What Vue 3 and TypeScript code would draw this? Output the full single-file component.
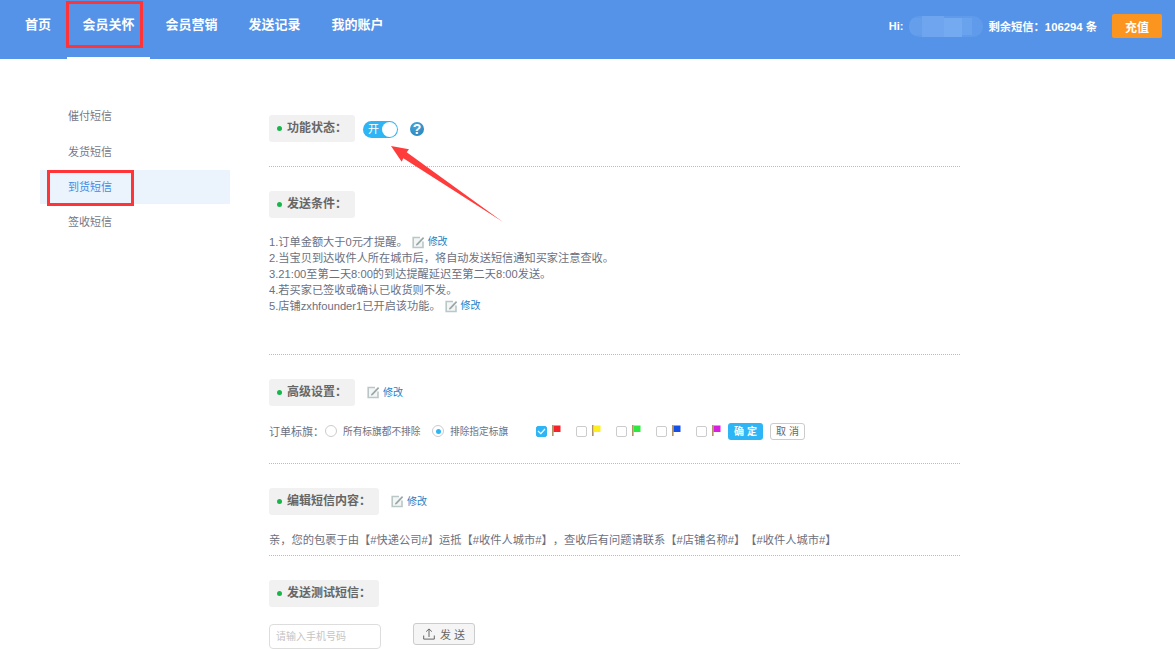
<script setup lang="ts">
const navItems: string[] = ['首页', '会员关怀', '会员营销', '发送记录', '我的账户']
const sideItems: string[] = ['催付短信', '发货短信', '到货短信', '签收短信']
const flags: { color: string; checked: boolean }[] = [
  { color: '#f5222a', checked: true },
  { color: '#fdee1e', checked: false },
  { color: '#2ee83f', checked: false },
  { color: '#1450e6', checked: false },
  { color: '#d81fe0', checked: false },
]
</script>

<template>
  <div class="page">
    <svg class="defs" width="0" height="0" aria-hidden="true">
      <symbol id="edit-icon" viewBox="0 0 13 13">
        <path d="M11 5.5V11.5H1.2V1.5H8" fill="#f4f6f6" stroke="#b9c7c7" stroke-width="1.6" />
        <path d="M5 8.6 11.6 1.6" fill="none" stroke="#9aa8a8" stroke-width="1.7" />
        <path d="M4 9.6 4.5 7.8 5.8 9.1Z" fill="#8b9999" />
      </symbol>
    </svg>

    <header class="topbar">
      <nav class="nav">
        <a v-for="(item, i) in navItems" :key="item" class="nav-item" :class="{ active: i === 1 }">{{ item }}</a>
      </nav>
      <div class="account">
        <span class="hi">Hi:</span>
        <span class="blurred"><i></i><i></i><i></i><i></i></span>
        <span class="quota">剩余短信：106294 条</span>
        <button class="recharge">充值</button>
      </div>
    </header>

    <div class="body">
      <aside class="side">
        <a v-for="(item, i) in sideItems" :key="item" class="side-item" :class="{ current: i === 2 }">{{ item }}</a>
      </aside>

      <main class="content">
        <section class="section first">
          <div class="head-row">
            <h3 class="head">功能状态：</h3>
            <span class="toggle"><span class="toggle-text">开</span><span class="knob"></span></span>
            <span class="help">?</span>
          </div>
        </section>

        <section class="section conditions">
          <div class="head-row"><h3 class="head">发送条件：</h3></div>
          <ol class="rules">
            <li>1.订单金额大于0元才提醒。<a class="edit inline"><svg width="13" height="13"><use href="#edit-icon" /></svg><span>修改</span></a></li>
            <li>2.当宝贝到达收件人所在城市后，将自动发送短信通知买家注意查收。</li>
            <li>3.21:00至第二天8:00的到达提醒延迟至第二天8:00发送。</li>
            <li>4.若买家已签收或确认已收货则不发。</li>
            <li>5.店铺zxhfounder1已开启该功能。<a class="edit inline"><svg width="13" height="13"><use href="#edit-icon" /></svg><span>修改</span></a></li>
          </ol>
        </section>

        <section class="section advanced">
          <div class="head-row">
            <h3 class="head">高级设置：</h3>
            <a class="edit"><svg width="13" height="13"><use href="#edit-icon" /></svg><span>修改</span></a>
          </div>
          <div class="flag-row">
            <span class="flag-label">订单标旗：</span>
            <span class="radio"></span>
            <span class="radio-text first-text">所有标旗都不排除</span>
            <span class="radio on"></span>
            <span class="radio-text second-text">排除指定标旗</span>
            <span class="flags">
              <span v-for="f in flags" :key="f.color" class="flag-opt">
                <span class="check" :class="{ checked: f.checked }">
                  <svg v-if="f.checked" width="9" height="7" viewBox="0 0 9 7"><path d="M1 3 3.8 5.6 8 1" fill="none" stroke="#fff" stroke-width="1.2" /></svg>
                </span>
                <svg class="flag" width="9" height="11" viewBox="0 0 9 11">
                  <rect x="0" y="0" width="1.6" height="11" fill="#b09468" />
                  <path d="M1.6 0.5H8.5V7H1.6Z" :fill="f.color" />
                </svg>
              </span>
            </span>
            <button class="btn-ok">确 定</button>
            <button class="btn-cancel">取 消</button>
          </div>
        </section>

        <section class="section sms">
          <div class="head-row">
            <h3 class="head">编辑短信内容：</h3>
            <a class="edit"><svg width="13" height="13"><use href="#edit-icon" /></svg><span>修改</span></a>
          </div>
          <p class="sms-text">亲，您的包裹于由【#快递公司#】运抵【#收件人城市#】，查收后有问题请联系【#店铺名称#】【#收件人城市#】</p>
        </section>

        <section class="section test">
          <div class="head-row"><h3 class="head">发送测试短信：</h3></div>
          <div class="test-row">
            <input class="phone" placeholder="请输入手机号码" />
            <button class="send">
              <svg width="12" height="12" viewBox="0 0 12 12"><path d="M6 9V1M3.2 3.6 6 .9l2.8 2.7M.7 7.5v3.6h10.6V7.5" fill="none" stroke="#666" stroke-width="1" /></svg>
              <span>发 送</span>
            </button>
          </div>
        </section>
      </main>
    </div>

    <!-- Hand-drawn annotations lying over the screenshot -->
    <span class="mark mark-nav"></span>
    <span class="mark mark-side"></span>
    <svg class="arrow" width="1175" height="649" viewBox="0 0 1175 649">
      <path d="M391 146 409 149.3 406.7 152.3 503 222 403.3 158.3 401.7 161.7Z" fill="#ff3c3c" />
    </svg>
  </div>
</template>

<style>
html, body { margin: 0; background: #fff; overflow: hidden; }
</style>

<style scoped>
.page {
  position: relative;
  width: 1175px;
  height: 649px;
  overflow: hidden;
  font-family: "Liberation Sans", "Noto Sans CJK SC", sans-serif;
  font-size: 11px;
  color: #6c7080;
  text-spacing-trim: space-all;
}
.defs { position: absolute; }
.topbar {
  display: flex;
  justify-content: space-between;
  align-items: stretch;
  height: 59px;
  background: #5593e8;
  color: #fff;
}
.nav { display: flex; padding-left: 9px; }
.nav-item {
  width: 58px;
  flex: none;
  text-align: center;
  line-height: 50px;
  font-size: 13px;
  font-weight: 700;
  white-space: nowrap;
}
.nav-item:nth-child(n + 2) { width: 83px; }
.nav-item.active { box-shadow: inset 0 -2px 0 #fff; }
.account {
  display: flex;
  align-items: center;
  padding: 0 13px 7px 0;
  font-size: 11px;
  font-weight: 700;
}
.hi { margin-right: 6px; }
.blurred {
  display: flex;
  width: 74px;
  height: 21px;
  margin-right: 5px;
  overflow: hidden;
  border-radius: 10px;
  background: #5f9bea;
}
.blurred i { display: block; }
.blurred i:nth-child(1) { width: 13px; margin: 2px 0; background: #659fec; }
.blurred i:nth-child(2) { width: 22px; background: #6ea5ee; }
.blurred i:nth-child(3) { width: 18px; margin-top: 2px; background: #74aaef; }
.blurred i:nth-child(4) { width: 10px; margin: 2px 0; background: #69a2ed; }
.quota { font-size: 11.3px; white-space: nowrap; }
.recharge {
  width: 50px;
  height: 24px;
  margin-left: 15px;
  padding: 0;
  border: 0;
  border-radius: 2px;
  background: #fb951f;
  color: #fff;
  font: 700 12px "Liberation Sans", "Noto Sans CJK SC", sans-serif;
}
.body { display: flex; }
.side {
  display: flex;
  flex-direction: column;
  gap: 1px;
  flex: none;
  width: 190px;
  margin: 41px 39px 0 40px;
}
.side-item {
  height: 34px;
  padding-left: 28px;
  line-height: 34px;
  font-size: 11px;
  color: #747888;
}
.side-item:first-child { line-height: 32px; }
.side-item.current { background: #ebf3fd; color: #3f8ae6; }
.content { width: 691px; padding-top: 56px; }
.section { padding-top: 24px; border-bottom: 1px dotted #bbb; }
.section.first { padding-top: 0; padding-bottom: 24px; }
.section.test { border-bottom: 0; }
.head-row { display: flex; align-items: center; height: 27px; }
.head {
  position: relative;
  margin: 0;
  padding: 0 8px 0 18px;
  height: 27px;
  border-radius: 3px;
  background: #f1f1f1;
  color: #666;
  font-size: 12px;
  font-weight: 700;
  line-height: 27px;
  white-space: nowrap;
}
.head::before {
  content: "";
  position: absolute;
  left: 8px;
  top: 11px;
  width: 5px;
  height: 5px;
  border-radius: 50%;
  background: #17b64a;
}
.toggle {
  position: relative;
  display: block;
  width: 35px;
  height: 17px;
  margin: 0 0 -1px 8px;
  border-radius: 9px;
  background: #2db5f6;
}
.toggle-text { position: absolute; left: 5px; top: 0; color: #fff; font-size: 11px; line-height: 16px; }
.knob {
  position: absolute;
  right: 1px;
  top: 1px;
  width: 15px;
  height: 15px;
  border-radius: 50%;
  background: #fff;
}
.help {
  width: 14px;
  height: 14px;
  margin-left: 12px;
  border-radius: 50%;
  background: radial-gradient(circle at 40% 30%, #45a5d8, #2480ba);
  color: #fff;
  font-size: 14px;
  font-weight: 700;
  line-height: 14px;
  text-align: center;
}
.edit {
  display: inline-flex;
  align-items: center;
  gap: 3px;
  margin-left: 12px;
  color: #1b82c8;
  font-size: 10px;
  line-height: 16px;
  vertical-align: top;
}
.edit.inline { margin-left: 4px; height: 16px; }
.rules {
  margin: 16px 0 0;
  padding: 0 0 40px;
  list-style: none;
  font-size: 11.2px;
  line-height: 16px;
}
.rules li { height: 16px; white-space: nowrap; }
.flag-row {
  display: flex;
  align-items: center;
  height: 22px;
  margin-top: 14px;
  margin-bottom: 21px;
}
.flag-label { width: 56px; flex: none; }
.radio {
  position: relative;
  width: 10px;
  height: 10px;
  flex: none;
  border: 1px solid #ccc;
  border-radius: 50%;
}
.radio.on::after {
  content: "";
  position: absolute;
  left: 2.5px;
  top: 2.5px;
  width: 5px;
  height: 5px;
  border-radius: 50%;
  background: #2db5f6;
}
.radio-text { font-size: 9.7px; white-space: nowrap; margin-left: 6px; flex: none; }
.first-text { width: 89px; }
.second-text { width: 86px; }
.flags { display: flex; }
.flag-opt { display: flex; align-items: center; width: 40px; }
.check {
  display: flex;
  align-items: center;
  justify-content: center;
  box-sizing: border-box;
  width: 11px;
  height: 11px;
  border: 1px solid #ccc;
  border-radius: 2px;
}
.check.checked { border-color: #2db5f6; background: #2db5f6; }
.flag { margin-left: 5px; margin-top: -1px; }
.btn-ok, .btn-cancel {
  width: 35px;
  height: 17px;
  flex: none;
  padding: 0;
  border-radius: 3px;
  font: 10px "Liberation Sans", "Noto Sans CJK SC", sans-serif;
  line-height: 15px;
}
.btn-ok {
  margin-left: -8px;
  border: 0;
  background: #2db5f6;
  color: #fff;
  font-weight: 700;
}
.btn-cancel { margin-left: 7px; border: 1px solid #ccc; background: #fff; color: #666; }
.sms-text { margin: 17px 0 0; padding-bottom: 7px; font-size: 11.25px; line-height: 16px; white-space: nowrap; }
.test-row { display: flex; align-items: flex-start; margin-top: 16px; }
.phone {
  box-sizing: border-box;
  width: 112px;
  height: 25px;
  margin-top: 1px;
  padding: 0 6px;
  border: 1px solid #ddd;
  border-radius: 4px;
  outline: 0;
  font: 10px "Liberation Sans", "Noto Sans CJK SC", sans-serif;
}
.phone::placeholder { color: #c4c4c4; }
.send {
  display: flex;
  align-items: center;
  justify-content: center;
  gap: 5px;
  box-sizing: border-box;
  width: 62px;
  height: 22px;
  margin-left: 32px;
  padding: 0;
  border: 1px solid #ccc;
  border-radius: 3px;
  background: #f5f5f5;
  color: #666;
  font: 11px "Liberation Sans", "Noto Sans CJK SC", sans-serif;
}
.mark { position: absolute; box-sizing: border-box; border: 3px solid #ff3439; pointer-events: none; }
.mark-nav { left: 66px; top: 1px; width: 77px; height: 47px; }
.mark-side { left: 47px; top: 170px; width: 87px; height: 36px; }
.arrow { position: absolute; left: 0; top: 0; pointer-events: none; }
</style>
